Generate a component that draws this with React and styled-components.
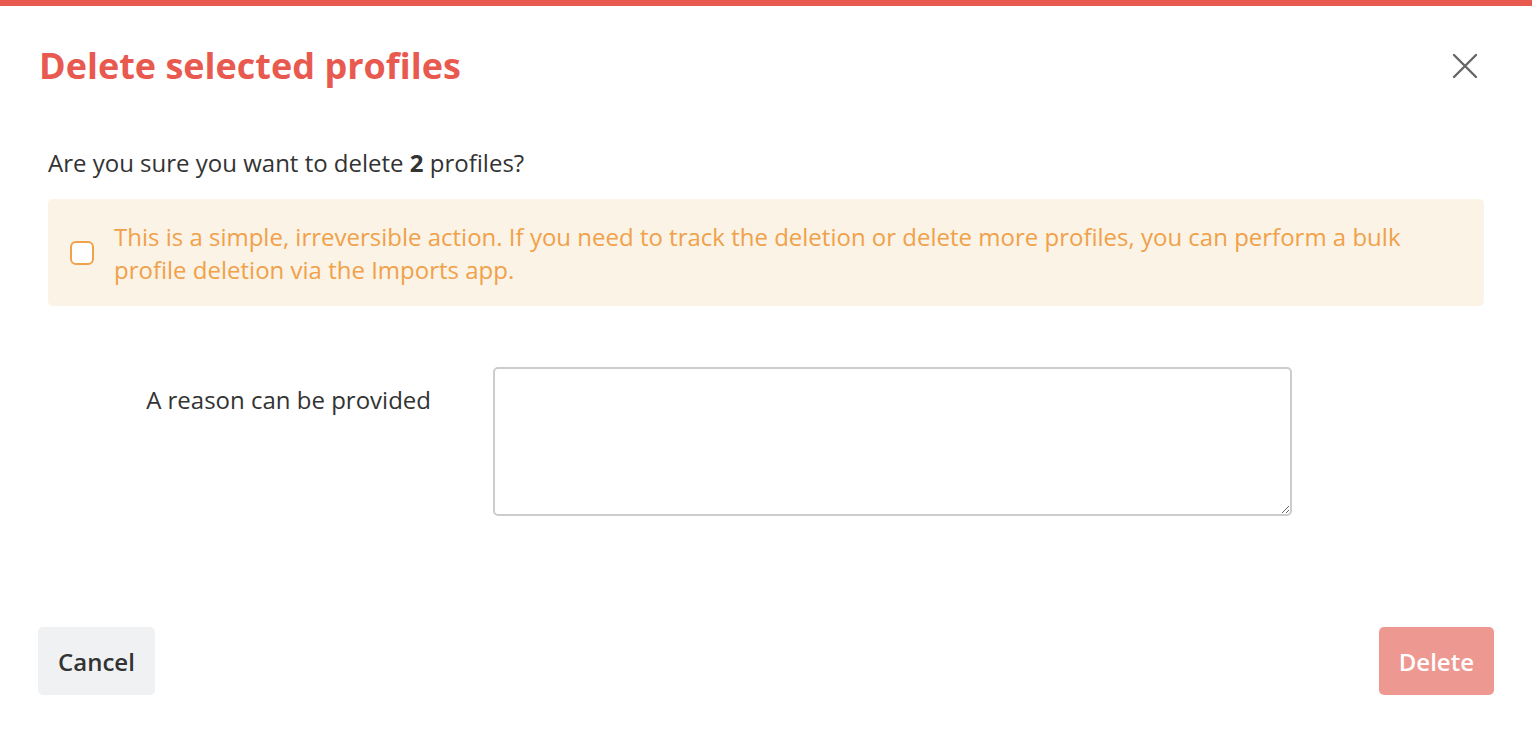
import React, { useState } from 'react';
import styled, { createGlobalStyle } from 'styled-components';

const GlobalStyle = createGlobalStyle`
  html, body {
    margin: 0;
    padding: 0;
    background: #ffffff;
  }
  body {
    font-family: "Open Sans", "Liberation Sans", sans-serif;
    color: #333333;
  }
  * {
    box-sizing: border-box;
  }
`;

const Modal = styled.div`
  width: 1532px;
  height: 732px;
  display: flex;
  flex-direction: column;
  background: #ffffff;
`;

const TopBar = styled.div`
  height: 6px;
  background: #e85a4f;
`;

const Header = styled.div`
  display: flex;
  align-items: center;
  justify-content: space-between;
  padding: 40px 49px 0 39px;
`;

const Title = styled.h1`
  margin: 0;
  font-size: 36px;
  line-height: 40px;
  font-weight: 700;
  color: #e85a4f;
`;

const CloseButton = styled.button`
  width: 36px;
  height: 36px;
  padding: 0;
  border: none;
  background: transparent;
  display: flex;
  align-items: center;
  justify-content: center;
  cursor: pointer;
`;

const Body = styled.div`
  padding: 62px 48px 0 48px;
  display: flex;
  flex-direction: column;
`;

const Question = styled.p`
  margin: 0;
  font-size: 24px;
  line-height: 30px;
  color: #333333;

  strong {
    font-weight: 700;
  }
`;

const Warning = styled.div`
  margin-top: 21px;
  display: flex;
  align-items: center;
  gap: 20px;
  padding: 21px 20px 20px 22px;
  background: #fbf3e6;
  border-radius: 5px;
`;

const Checkbox = styled.span`
  flex: none;
  width: 24px;
  height: 24px;
  border: 2px solid #f0a14a;
  border-radius: 6px;
  background: #ffffff;
`;

const WarningText = styled.p`
  margin: 0;
  font-size: 24px;
  line-height: 33px;
  color: #f0a14a;
`;

const FormRow = styled.div`
  margin-top: 61px;
  display: flex;
  align-items: flex-start;
`;

const Label = styled.label`
  width: 445px;
  padding: 18px 62px 0 0;
  text-align: right;
  font-size: 24px;
  line-height: 30px;
  color: #333333;
`;

const Reason = styled.textarea`
  width: 799px;
  height: 149px;
  border: 2px solid #cccccc;
  border-radius: 5px;
  font-family: inherit;
  font-size: 20px;
  padding: 10px 12px;
  resize: both;
  outline: none;
`;

const Footer = styled.div`
  margin-top: auto;
  display: flex;
  justify-content: space-between;
  padding: 0 38px 37px 38px;
`;

const Button = styled.button`
  height: 68px;
  padding: 0 20px;
  border: none;
  border-radius: 5px;
  font-family: inherit;
  font-size: 24px;
  font-weight: 600;
  color: ${p => (p.$danger ? '#ffffff' : '#333333')};
  background: ${p => (p.$danger ? '#ed9991' : '#f0f1f3')};
  cursor: ${p => (p.disabled ? 'default' : 'pointer')};
`;

const App = () => {
  const [reason, setReason] = useState('');
  const count = 2;

  return (
    <>
      <GlobalStyle />
      <Modal>
        <TopBar />
        <Header>
          <Title>Delete selected profiles</Title>
          <CloseButton aria-label="Close">
            <svg width="26" height="26" viewBox="0 0 26 26">
              <path d="M2 2 L24 24 M24 2 L2 24" stroke="#666666" strokeWidth="2.4" strokeLinecap="round" />
            </svg>
          </CloseButton>
        </Header>
        <Body>
          <Question>
            Are you sure you want to delete <strong>{count}</strong> profiles?
          </Question>
          <Warning>
            <Checkbox />
            <WarningText>
              This is a simple, irreversible action. If you need to track the deletion or delete more profiles, you can perform a bulk profile deletion via the Imports app.
            </WarningText>
          </Warning>
          <FormRow>
            <Label htmlFor="reason">A reason can be provided</Label>
            <Reason id="reason" value={reason} onChange={e => setReason(e.target.value)} />
          </FormRow>
        </Body>
        <Footer>
          <Button>Cancel</Button>
          <Button $danger disabled={!reason}>Delete</Button>
        </Footer>
      </Modal>
    </>
  );
};

export default App;
